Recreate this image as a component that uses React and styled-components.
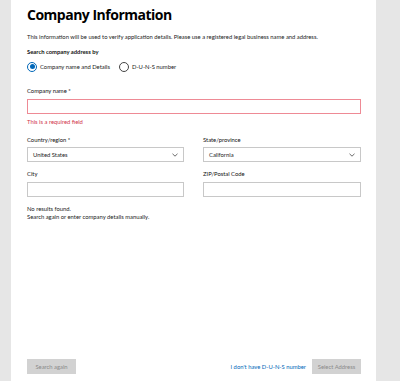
import React from "react";
import styled, { createGlobalStyle } from "styled-components";

const Global = createGlobalStyle`
  html, body { margin: 0; padding: 0; }
  body { font-family: Lato, "Open Sans", sans-serif; color: #111; background: #e6e6e6; }
  * { box-sizing: border-box; }
`;

const Page = styled.div`
  display: flex;
  width: 400px;
  height: 381px;
  background: #e6e6e6;
`;

const Strip = styled.div`
  width: ${(p) => p.$w}px;
  flex: none;
  background: #e6e6e6;
`;

const Panel = styled.main`
  flex: none;
  width: 365px;
  background: #fff;
  display: flex;
  flex-direction: column;
  padding: 4px 15px 7px 16px;
`;

const Title = styled.h1`
  margin: 0;
  font-family: "Open Sans", sans-serif;
  font-size: 14px;
  line-height: 22px;
  font-weight: 700;
  letter-spacing: -0.5px;
  color: #000;
`;

const Small = `
  font-size: 5.85px;
`;

const Desc = styled.p`
  margin: 6px 0 0;
  ${Small}
  line-height: 9px;
  color: #222;
  white-space: nowrap;
`;

const SectionLabel = styled.div`
  margin-top: 6px;
  ${Small}
  line-height: 9px;
  font-weight: 700;
`;

const RadioRow = styled.div`
  display: flex;
  align-items: center;
  gap: 9px;
  margin-top: 5px;
  height: 11px;
`;

const RadioItem = styled.label`
  display: flex;
  align-items: center;
  gap: 3px;
  ${Small}
  color: #222;
`;

const RadioCircle = styled.span`
  width: 10px;
  height: 10px;
  border-radius: 50%;
  border: 1px solid ${(p) => (p.$on ? "#0067b8" : "#444")};
  display: flex;
  align-items: center;
  justify-content: center;
  &::after {
    content: "";
    width: 5px;
    height: 5px;
    border-radius: 50%;
    background: ${(p) => (p.$on ? "#0067b8" : "transparent")};
  }
`;

const Field = styled.div`
  display: flex;
  flex-direction: column;
  margin-top: ${(p) => p.$mt || 0}px;
`;

const Label = styled.div`
  ${Small}
  line-height: 8px;
  font-weight: 400;
  color: #111;
  margin-bottom: 3.5px;
`;

const Input = styled.div`
  height: 15px;
  border: 1px solid ${(p) => (p.$error ? "#ee8a95" : "#c8c8c8")};
  background: #fff;
`;

const ErrorText = styled.div`
  margin-top: 4px;
  ${Small}
  line-height: 8px;
  color: #d1344a;
`;

const Grid = styled.div`
  display: grid;
  grid-template-columns: 157px 158px;
  column-gap: 19px;
  row-gap: 8px;
  margin-top: 10px;
`;

const Select = styled.div`
  height: 15px;
  border: 1px solid #c8c8c8;
  display: flex;
  align-items: center;
  justify-content: space-between;
  padding: 0 5px 0 5px;
  ${Small}
  color: #222;
`;

const Notice = styled.div`
  margin-top: 8px;
  ${Small}
  line-height: 8px;
  color: #222;
`;

const Footer = styled.div`
  margin-top: auto;
  display: flex;
  align-items: center;
`;

const Button = styled.button`
  width: 49px;
  height: 15px;
  padding: 0;
  border: none;
  background: #d2d2d2;
  color: #8a8a8a;
  font-family: inherit;
  ${Small}
  cursor: default;
`;

const LinkText = styled.a`
  margin-left: auto;
  margin-right: 6px;
  ${Small}
  color: #0067b8;
  text-decoration: none;
`;

const Chevron = () => (
  <svg width="6" height="4" viewBox="0 0 6 4">
    <path d="M0.5 0.8 L3 3.2 L5.5 0.8" fill="none" stroke="#444" strokeWidth="0.8" />
  </svg>
);

export default function App() {
  return (
    <Page>
      <Global />
      <Strip $w={11} />
      <Panel>
        <Title>Company Information</Title>
        <Desc>
          This information will be used to verify application details. Please use a registered legal business name and address.
        </Desc>
        <SectionLabel>Search company address by</SectionLabel>
        <RadioRow>
          <RadioItem>
            <RadioCircle $on />
            Company name and Details
          </RadioItem>
          <RadioItem>
            <RadioCircle />
            D-U-N-S number
          </RadioItem>
        </RadioRow>
        <Field $mt={15}>
          <Label>Company name *</Label>
          <Input $error />
          <ErrorText>This is a required field</ErrorText>
        </Field>
        <Grid>
          <Field>
            <Label>Country/region *</Label>
            <Select>
              United States
              <Chevron />
            </Select>
          </Field>
          <Field>
            <Label>State/province</Label>
            <Select>
              California
              <Chevron />
            </Select>
          </Field>
          <Field>
            <Label>City</Label>
            <Input />
          </Field>
          <Field>
            <Label>ZIP/Postal Code</Label>
            <Input />
          </Field>
        </Grid>
        <Notice>
          No results found.
          <br />
          Search again or enter company details manually.
        </Notice>
        <Footer>
          <Button>Search again</Button>
          <LinkText>I don't have D-U-N-S number</LinkText>
          <Button>Select Address</Button>
        </Footer>
      </Panel>
      <Strip $w={24} />
    </Page>
  );
}
